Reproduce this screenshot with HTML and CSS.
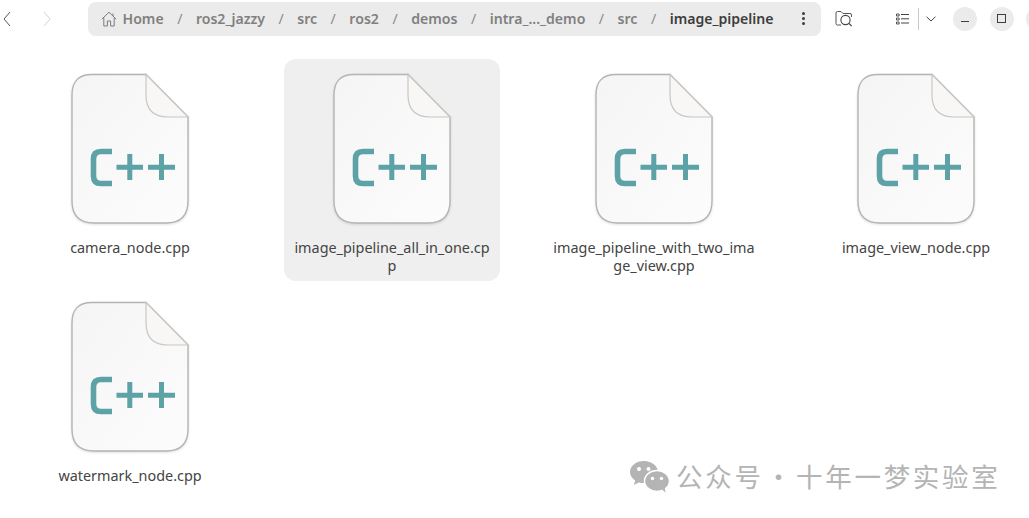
FILE: index.html
```html
<!DOCTYPE html>
<html>
<head>
    <title>image_pipeline</title>
    <link rel="stylesheet" href="styles.css">
</head>
<body>
    <svg class="defs" width="0" height="0">
        <defs>
            <linearGradient id="paper" x1="0" y1="0" x2="1" y2="1">
                <stop offset="0" stop-color="#f5f5f5"/>
                <stop offset="1" stop-color="#fcfcfc"/>
            </linearGradient>
            <symbol id="cpp" viewBox="0 0 120 152">
                <path d="M22 1.5H76L118 44V128Q118 150 96 150H24Q2 150 2 128V22Q2 1.5 22 1.5Z" fill="url(#paper)" stroke="#b4b4b2" stroke-width="1.4"/>
                <path d="M76 1.5V22Q76 44 98 44H118Z" fill="#f8f7f5" stroke="#c8c7c4" stroke-width="1.2"/>
                <path d="M42 78.500H31Q23.500 78.500 23.500 86V103Q23.500 110.500 31 110.500H42" fill="none" stroke="#5ca2a7" stroke-width="5.600"/>
                <path d="M46.500 94.300H73M59.800 81V107M78 94.300H105M91.500 81V107" fill="none" stroke="#5ca2a7" stroke-width="5"/>
            </symbol>
        </defs>
    </svg>

    <header class="toolbar">
        <div class="nav">
            <svg class="nav-icon" width="10" height="16" viewBox="0 0 10 16"><path d="M8 1L2 8l6 7" fill="none" stroke="#555" stroke-width="1"/></svg>
            <svg class="nav-icon nav-next" width="10" height="16" viewBox="0 0 10 16"><path d="M2 1l6 7-6 7" fill="none" stroke="#d4d4d4" stroke-width="1"/></svg>
        </div>
        <nav class="pathbar">
            <svg class="home-icon" width="16" height="16" viewBox="0 0 16 16">
                <path d="M.8 8.200L8 1.200l7.200 7M2.800 6.600V15h3.600v-5h3.200v5h3.600V6.600M12 2.500v2.600" fill="none" stroke="#7d7d7d" stroke-width="1"/>
            </svg>
            <span class="crumb">Home</span><span class="sep">/</span>
            <span class="crumb">ros2_jazzy</span><span class="sep">/</span>
            <span class="crumb">src</span><span class="sep">/</span>
            <span class="crumb">ros2</span><span class="sep">/</span>
            <span class="crumb">demos</span><span class="sep">/</span>
            <span class="crumb">intra_..._demo</span><span class="sep">/</span>
            <span class="crumb">src</span><span class="sep">/</span>
            <span class="crumb current">image_pipeline</span>
            <span class="dots"><i></i><i></i><i></i></span>
        </nav>
        <svg class="search-icon" width="18" height="17" viewBox="0 0 18 17">
            <path d="M6 15H2.500Q1 15 1 13.500V3Q1 1.500 2.500 1.500H6L8 3.500H15Q16.500 3.500 16.500 5V7" fill="none" stroke="#555" stroke-width="1"/>
            <circle cx="10.500" cy="10" r="4.600" fill="none" stroke="#444" stroke-width="1.100"/>
            <path d="M13.800 13.400L16.600 16" stroke="#444" stroke-width="1.200"/>
        </svg>
        <svg class="list-icon" width="13" height="12" viewBox="0 0 13 12">
            <path d="M.5 1h2.600v2H.5zM.5 5h2.600v2H.5zM.5 9h2.600v2H.5z" fill="none" stroke="#444" stroke-width=".9"/>
            <path d="M5 1.500h8M5 5.800h8M5 10h8" stroke="#444" stroke-width="1"/>
        </svg>
        <span class="divider"></span>
        <svg class="chevron" width="10" height="6" viewBox="0 0 10 6"><path d="M.6.8L5 5l4.400-4.200" fill="none" stroke="#444" stroke-width="1"/></svg>
        <div class="window-buttons">
            <span class="win-btn"><span class="win-min"></span></span>
            <span class="win-btn"><span class="win-max"></span></span>
            <span class="win-btn"></span>
        </div>
    </header>

    <main class="files">
        <div class="file">
            <svg class="file-icon"><use href="#cpp"/></svg>
            <div class="file-name">camera_node.cpp</div>
        </div>
        <div class="file selected">
            <svg class="file-icon"><use href="#cpp"/></svg>
            <div class="file-name">image_pipeline_all_in_one.cpp</div>
        </div>
        <div class="file">
            <svg class="file-icon"><use href="#cpp"/></svg>
            <div class="file-name">image_pipeline_with_two_image_view.cpp</div>
        </div>
        <div class="file">
            <svg class="file-icon"><use href="#cpp"/></svg>
            <div class="file-name">image_view_node.cpp</div>
        </div>
        <div class="file">
            <svg class="file-icon"><use href="#cpp"/></svg>
            <div class="file-name">watermark_node.cpp</div>
        </div>
    </main>

    <div class="watermark">
        <svg width="39" height="32" viewBox="0 0 39 32">
            <path d="M14 0C6.300 0 0 4.900 0 11c0 3.500 2 6.500 5.200 8.600L3.800 24l5-2.600c1.700.5 3.400.7 5.200.7 7.700 0 14-4.900 14-11S21.700 0 14 0z" fill="#b4b4b4"/>
            <ellipse cx="27" cy="20" rx="12.500" ry="10.500" fill="#b4b4b4" stroke="#fff" stroke-width="1.500"/>
            <path d="M32 28.500l3.500 3-.8-5z" fill="#b4b4b4"/>
            <circle cx="9" cy="8" r="2" fill="#fff"/>
            <circle cx="18.500" cy="8" r="2" fill="#fff"/>
            <circle cx="22.500" cy="17.500" r="1.700" fill="#fff"/>
            <circle cx="31.500" cy="17.500" r="1.700" fill="#fff"/>
        </svg>
        <span class="watermark-text">公众号 · 十年一梦实验室</span>
    </div>
</body>
</html>
```

FILE: styles.css
```css
html, body {
    margin: 0;
    height: 100%;
    overflow: hidden;
    background-color: #fff;
}

body {
    font-family: "Noto Sans", "Liberation Sans", sans-serif;
    color: #444;
}

.defs {
    display: block;
    height: 0;
}

.toolbar {
    display: flex;
    align-items: center;
    height: 35px;
    margin-top: 1px;
}

.toolbar > * {
    flex: none;
}

.nav {
    display: flex;
    gap: 30px;
    width: 88px;
    padding-left: 2px;
    box-sizing: border-box;
}

.pathbar {
    display: flex;
    align-items: center;
    gap: 13.5px;
    width: 733px;
    height: 34px;
    padding-left: 13px;
    box-sizing: border-box;
    background-color: #ebebeb;
    border-radius: 8px;
    font-size: 14.1px;
    font-weight: 600;
    color: #808080;
}

.home-icon {
    margin-right: -8px;
}

.sep {
    font-weight: 400;
    color: #8c8c8c;
}

.current {
    color: #3d3d3d;
}

.dots {
    display: flex;
    flex-direction: column;
    gap: 2px;
    margin-left: auto;
    margin-right: 16px;
}

.dots i {
    width: 3px;
    height: 3px;
    border-radius: 50%;
    background-color: #3d3d3d;
}

.search-icon {
    margin-left: 14px;
}

.list-icon {
    margin-left: 43px;
}

.divider {
    width: 1px;
    height: 22px;
    margin-left: 9px;
    background-color: #c8c8c8;
}

.chevron {
    margin-left: 7px;
}

.window-buttons {
    display: flex;
    gap: 12.5px;
    margin-left: 17px;
}

.win-btn {
    display: flex;
    align-items: center;
    justify-content: center;
    flex: none;
    width: 24px;
    height: 24px;
    border-radius: 50%;
    background-color: #ebebeb;
}

.win-min {
    width: 8px;
    height: 1px;
    margin-top: 6px;
    background-color: #3d3d3d;
}

.win-max {
    width: 7px;
    height: 7px;
    border: 1px solid #3d3d3d;
}

.files {
    display: grid;
    grid-template-columns: repeat(4, 260px);
    grid-auto-rows: 222px;
    column-gap: 2px;
    row-gap: 6px;
    margin-top: 23px;
}

.file {
    display: flex;
    flex-direction: column;
    align-items: center;
    justify-self: center;
    width: 216px;
    padding-top: 14px;
    box-sizing: border-box;
    border-radius: 12px;
}

.file.selected {
    background-color: #efefef;
}

.file-icon {
    width: 120px;
    height: 152px;
    flex: none;
    filter: drop-shadow(0 1px 1px rgba(0, 0, 0, 0.12));
}

.file-name {
    width: 203.5px;
    margin-top: 13.5px;
    font-size: 14.4px;
    line-height: 18px;
    text-align: center;
    word-break: break-all;
}

.watermark {
    position: absolute;
    left: 630px;
    top: 461px;
    display: flex;
    align-items: flex-start;
    gap: 7px;
}

.watermark-text {
    margin-top: -1px;
    font-family: "Noto Sans CJK SC", sans-serif;
    font-size: 26.5px;
    letter-spacing: 2.7px;
    word-spacing: -7px;
    line-height: 32px;
    color: #b4b4b4;
    white-space: nowrap;
}
```
